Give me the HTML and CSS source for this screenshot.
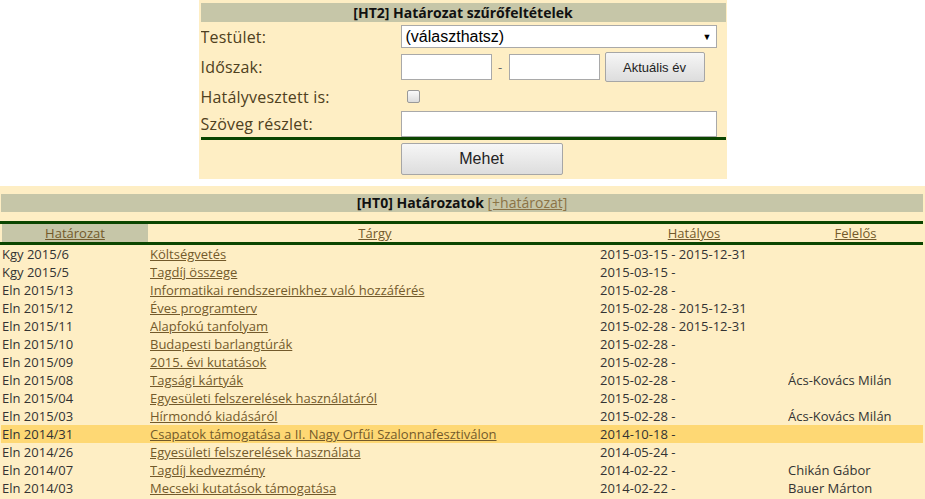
FILE: index.html
```html
<!DOCTYPE html>
<html lang="hu">
<head>
<meta charset="utf-8">
<title>Határozatok</title>
<link rel="stylesheet" href="styles.css">
</head>
<body>
<div class="filter">
  <div class="bar">[HT2] Határozat szűrőfeltételek</div>
  <div class="frow r1">
    <div class="lbl">Testület:</div>
    <div class="fld"><div class="select"><span>(választhatsz)</span><span class="arrow">▼</span></div></div>
  </div>
  <div class="frow r2">
    <div class="lbl">Időszak:</div>
    <div class="fld"><span class="inp short"></span><span class="dash">-</span><span class="inp short"></span><span class="btn small">Aktuális év</span></div>
  </div>
  <div class="frow r3">
    <div class="lbl">Hatályvesztett is:</div>
    <div class="fld"><span class="chk"></span></div>
  </div>
  <div class="frow r4">
    <div class="lbl">Szöveg részlet:</div>
    <div class="fld"><span class="inp wide"></span></div>
  </div>
  <div class="rule"></div>
  <div class="frow r5">
    <div class="lbl"></div>
    <div class="fld"><span class="btn big">Mehet</span></div>
  </div>
</div>

<div class="list">
  <div class="bar">[HT0] Határozatok <a href="#" class="addlink">[+határozat]</a></div>
  <div class="thead">
    <div class="th first"><a href="#">Határozat</a></div>
    <div class="th"><a href="#">Tárgy</a></div>
    <div class="th"><a href="#">Hatályos</a></div>
    <div class="th"><a href="#">Felelős</a></div>
  </div>
  <div class="tr"><div class="td">Kgy 2015/6</div><div class="td"><a href="#">Költségvetés</a></div><div class="td">2015-03-15 - 2015-12-31</div><div class="td"></div></div>
  <div class="tr"><div class="td">Kgy 2015/5</div><div class="td"><a href="#">Tagdíj összege</a></div><div class="td">2015-03-15 -</div><div class="td"></div></div>
  <div class="tr"><div class="td">Eln 2015/13</div><div class="td"><a href="#">Informatikai rendszereinkhez való hozzáférés</a></div><div class="td">2015-02-28 -</div><div class="td"></div></div>
  <div class="tr"><div class="td">Eln 2015/12</div><div class="td"><a href="#">Éves programterv</a></div><div class="td">2015-02-28 - 2015-12-31</div><div class="td"></div></div>
  <div class="tr"><div class="td">Eln 2015/11</div><div class="td"><a href="#">Alapfokú tanfolyam</a></div><div class="td">2015-02-28 - 2015-12-31</div><div class="td"></div></div>
  <div class="tr"><div class="td">Eln 2015/10</div><div class="td"><a href="#">Budapesti barlangtúrák</a></div><div class="td">2015-02-28 -</div><div class="td"></div></div>
  <div class="tr"><div class="td">Eln 2015/09</div><div class="td"><a href="#">2015. évi kutatások</a></div><div class="td">2015-02-28 -</div><div class="td"></div></div>
  <div class="tr"><div class="td">Eln 2015/08</div><div class="td"><a href="#">Tagsági kártyák</a></div><div class="td">2015-02-28 -</div><div class="td">Ács-Kovács Milán</div></div>
  <div class="tr"><div class="td">Eln 2015/04</div><div class="td"><a href="#">Egyesületi felszerelések használatáról</a></div><div class="td">2015-02-28 -</div><div class="td"></div></div>
  <div class="tr"><div class="td">Eln 2015/03</div><div class="td"><a href="#">Hírmondó kiadásáról</a></div><div class="td">2015-02-28 -</div><div class="td">Ács-Kovács Milán</div></div>
  <div class="tr hl"><div class="td">Eln 2014/31</div><div class="td"><a href="#">Csapatok támogatása a II. Nagy Orfűi Szalonnafesztiválon</a></div><div class="td">2014-10-18 -</div><div class="td"></div></div>
  <div class="tr"><div class="td">Eln 2014/26</div><div class="td"><a href="#">Egyesületi felszerelések használata</a></div><div class="td">2014-05-24 -</div><div class="td"></div></div>
  <div class="tr"><div class="td">Eln 2014/07</div><div class="td"><a href="#">Tagdíj kedvezmény</a></div><div class="td">2014-02-22 -</div><div class="td">Chikán Gábor</div></div>
  <div class="tr"><div class="td">Eln 2014/03</div><div class="td"><a href="#">Mecseki kutatások támogatása</a></div><div class="td">2014-02-22 -</div><div class="td">Bauer Márton</div></div>
</div>
</body>
</html>
```
FILE: styles.css
```css
html, body { margin: 0; padding: 0; background: #fff; }
body { font-family: "Open Sans", "DejaVu Sans", sans-serif; color: #333; font-size: 13px; }
a { color: #735a2b; text-decoration: underline; }

.filter {
  width: 525px;
  margin: 0 auto;
  padding: 3px 1px 0 2px;
  background: #feeec4;
}
.bar {
  background: #c6c6a8;
  color: #111;
  font-weight: bold;
  font-size: 14px;
  text-align: center;
  height: 19px;
  line-height: 19px;
  overflow: hidden;
}
.frow { display: grid; grid-template-columns: 200px 1fr; align-items: center; overflow: hidden; }
.lbl { font-size: 16px; line-height: 20px; color: #4e4020; letter-spacing: 0.2px; }
.fld { display: flex; align-items: center; }
.r1 { height: 29px; }
.r2 { height: 32px; }
.r3 { height: 27px; }
.r4 { height: 27px; align-items: end; }
.r4 .lbl { align-self: center; }
.r5 { height: 39px; align-items: start; }
.r5 .fld { padding-top: 3px; }

.select {
  width: 306px; height: 21px;
  background: #fff; border: 1px solid #a9a9a9;
  display: flex; justify-content: space-between; align-items: center;
  padding: 0 4px 0 4px;
  font-family: "Liberation Sans", Arial, sans-serif; font-size: 16px; color: #000;
}
.arrow { font-size: 9px; }
.inp { display: block; height: 24px; background: #fff; border: 1px solid #a9a9a9; }
.short { width: 89px; }
.wide { width: 314px; height: 24px; }
.dash { width: 17px; text-align: center; color: #666; font-size: 13px; }
.btn {
  display: flex; align-items: center; justify-content: center;
  border: 1px solid #a6a6a6; border-radius: 2px;
  background: linear-gradient(#f6f6f6, #dddddd);
  font-family: "Liberation Sans", Arial, sans-serif; color: #222;
}
.small { width: 98px; height: 28px; margin-left: 5px; font-size: 13px; }
.big { width: 160px; height: 30px; font-size: 16px; }
.chk {
  display: block; width: 11px; height: 11px; margin-left: 6px;
  border: 1px solid #999; border-radius: 2px;
  background: linear-gradient(#fafafa, #dcdcdc);
}
.rule { height: 3px; background: #0b4500; }

.list {
  margin-top: 7px;
  background: #feeec4;
  padding: 8px 2px 2px 0;
}
.list .bar { margin-left: 1px; height: 18px; line-height: 18px; }
.addlink { font-weight: normal; color: #8b7346; }
.thead, .tr {
  display: grid;
  grid-template-columns: 150px 450px 188px 1fr;
}
.thead {
  margin-top: 9px;
  border-top: 3px solid #0b4500;
  border-bottom: 3px solid #0b4500;
  height: 18px;
  line-height: 18px;
}
.th { text-align: center; }
.th.first { background: #c6c6a8; margin: 0 2px; }
.tr { height: 18px; line-height: 18px; }
.td { white-space: nowrap; overflow: hidden; }
.tr .td:first-child { padding-left: 2px; }
.tr.hl { background: #fed874; margin-left: 1px; grid-template-columns: 149px 450px 188px 1fr; }
.tr.hl .td:first-child { padding-left: 1px; }
```
